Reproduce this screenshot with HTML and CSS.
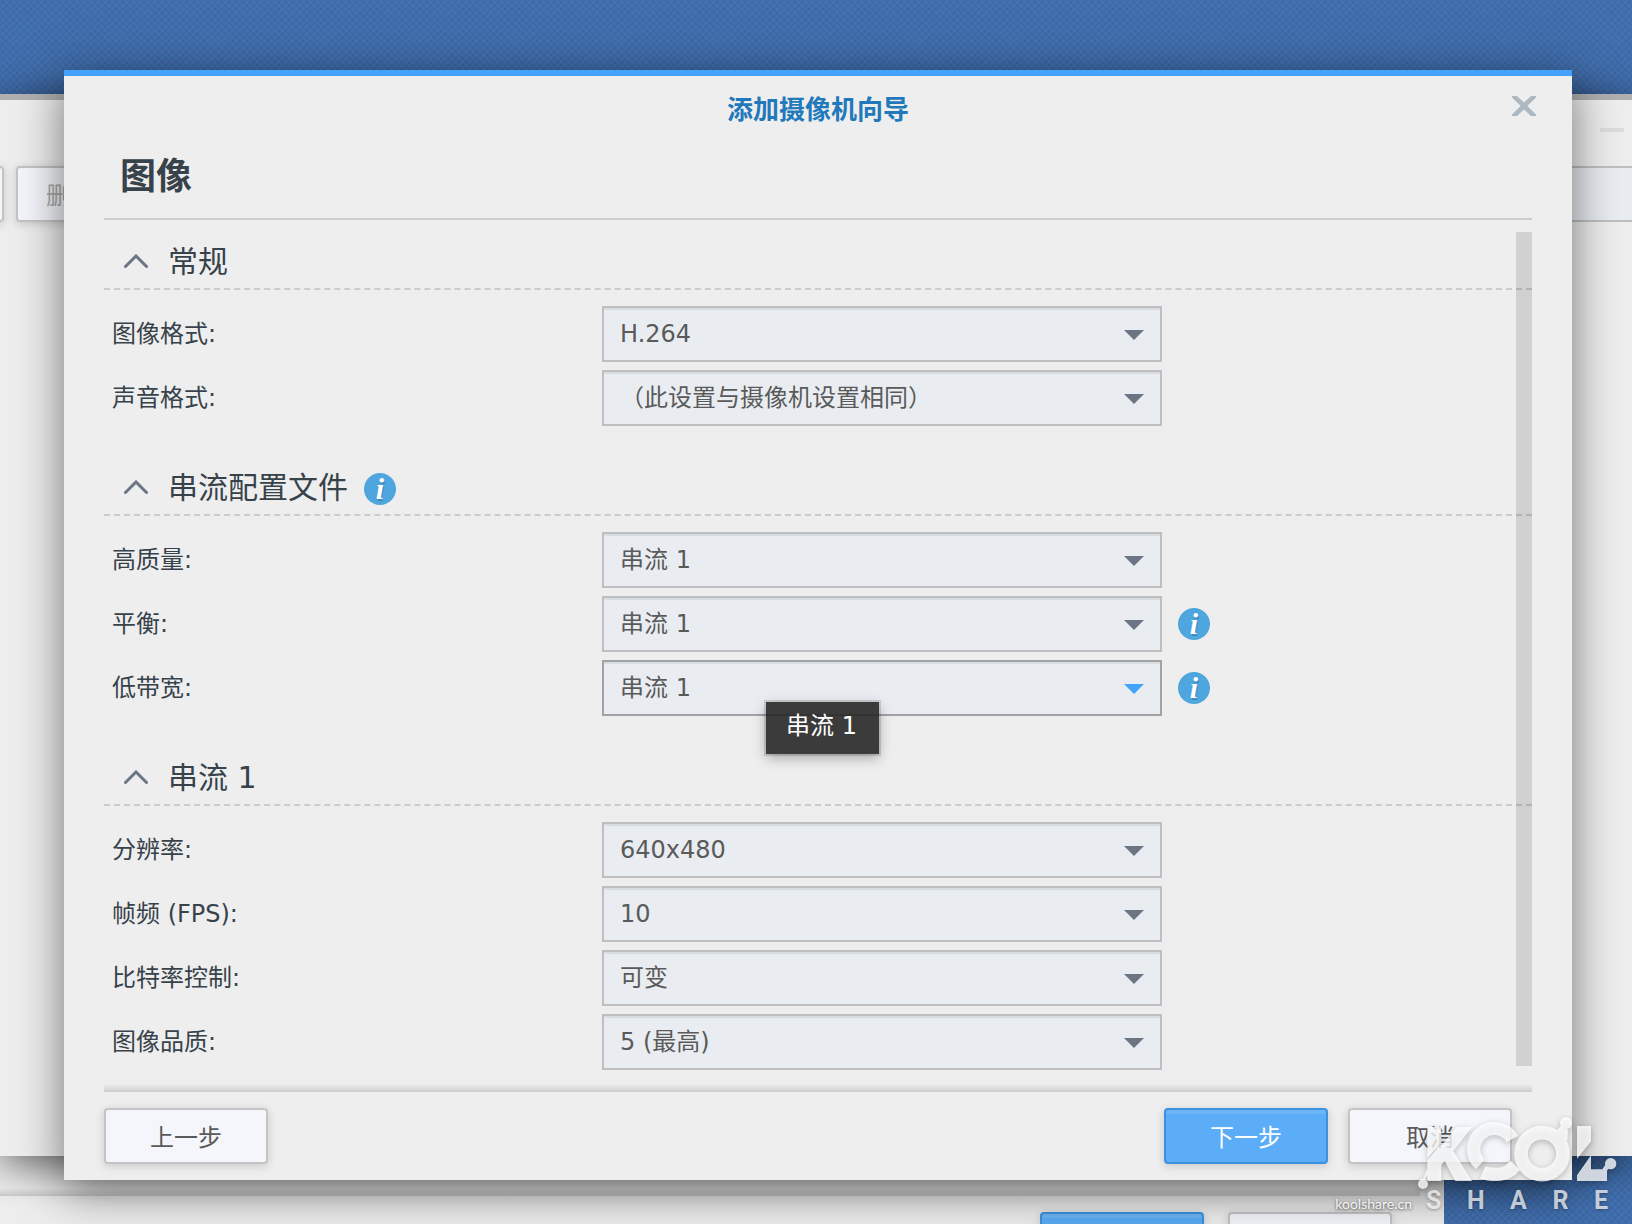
FILE: index.html
```html
<!DOCTYPE html>
<html lang="zh-CN">
<head>
<meta charset="utf-8">
<title>添加摄像机向导</title>
<link rel="stylesheet" href="styles.css">
</head>
<body>
<div class="desktop">
  <div class="lower-window">
    <div class="lower-footer">
      <button class="btn btn-primary" type="button" aria-label="下一步"></button>
      <button class="btn" type="button" aria-label="取消"></button>
    </div>
  </div>

  <div class="app-window">
    <div class="app-titlebar"><span class="minimize"></span></div>
    <div class="app-toolbar">
      <button class="btn btn-cut" type="button" aria-label="编辑"></button>
      <button class="btn btn-delete" type="button" disabled>删除</button>
      <input class="search" type="text" aria-label="搜索">
    </div>
  </div>

  <main class="dialog" role="dialog" aria-labelledby="dialog-title">
    <header class="dialog-header">
      <h1 class="dialog-title" id="dialog-title">添加摄像机向导</h1>
      <button class="close" type="button" aria-label="关闭">
        <svg width="24" height="20" viewBox="0 0 24 20"><path d="M0 0h5l7 6.500L19 0h5v1.500L15.300 10 24 18.500V20h-5l-7-6.500L5 20H0v-1.500L8.700 10 0 1.500z" fill="#adb9c2"/></svg>
      </button>
    </header>
    <h2 class="step-title">图像</h2>

    <form class="panel">
      <section>
        <h3 class="section-title"><svg class="chevron" viewBox="0 0 24 14"><path d="M1.500 12.500 12 2l10.500 10.500"/></svg>常规</h3>
        <div class="row"><label for="video">图像格式:</label><span class="select"><select id="video"><option>H.264</option></select></span></div>
        <div class="row"><label for="audio">声音格式:</label><span class="select"><select id="audio"><option>（此设置与摄像机设置相同）</option></select></span></div>
      </section>
      <section>
        <h3 class="section-title"><svg class="chevron" viewBox="0 0 24 14"><path d="M1.500 12.500 12 2l10.500 10.500"/></svg>串流配置文件<span class="info">i</span></h3>
        <div class="row"><label for="high">高质量:</label><span class="select"><select id="high"><option>串流 1</option></select></span></div>
        <div class="row"><label for="balanced">平衡:</label><span class="select"><select id="balanced"><option>串流 1</option></select></span><span class="info">i</span></div>
        <div class="row"><label for="low">低带宽:</label><span class="select select-hover"><select id="low"><option>串流 1</option></select><span class="tooltip" role="tooltip">串流 1</span></span><span class="info">i</span></div>
      </section>
      <section>
        <h3 class="section-title"><svg class="chevron" viewBox="0 0 24 14"><path d="M1.500 12.500 12 2l10.500 10.500"/></svg>串流 1</h3>
        <div class="row"><label for="resolution">分辨率:</label><span class="select"><select id="resolution"><option>640x480</option></select></span></div>
        <div class="row"><label for="fps">帧频 (FPS):</label><span class="select"><select id="fps"><option>10</option></select></span></div>
        <div class="row"><label for="bitrate">比特率控制:</label><span class="select"><select id="bitrate"><option>可变</option></select></span></div>
        <div class="row"><label for="quality">图像品质:</label><span class="select"><select id="quality"><option>5 (最高)</option></select></span></div>
      </section>
      <span class="scrollbar"></span>
    </form>

    <footer class="dialog-footer">
      <button class="btn btn-back" type="button">上一步</button>
      <button class="btn btn-primary" type="button">下一步</button>
      <button class="btn" type="button">取消</button>
    </footer>
  </main>

  <div class="watermark">
    <span class="watermark-site">koolshare.cn</span>
    <div class="watermark-brand">
      <svg class="watermark-logo" viewBox="0 0 660 240" role="img" aria-label="KOOL">
        <g fill="#fff" opacity=".78">
          <path d="M46 45h42v56l46-56h46l-56 72 56 90h-50l-32-60-10 12v48H46v-20l-13 25-4-2 17-38v-26l42-52-42 44z"/>
          <circle cx="33" cy="216" r="15"/>
          <path d="M301 81A62 62 0 1 0 205 157" fill="none" stroke="#fff" stroke-width="40"/>
          <path d="M212 181q14 6 42 6c28 0 42-12 56-27" fill="none" stroke="#fff" stroke-width="40"/>
          <circle cx="390" cy="125" r="63" fill="none" stroke="#fff" stroke-width="41"/>
          <path d="m428 62 22-24 18 16-2 34z"/>
          <circle cx="462" cy="33" r="18"/>
          <path d="M495 42h42v46l-42 52zM495 190l42-60v42h34l16-24 8 14-10 14v31h-90z"/>
          <circle cx="596" cy="155" r="17"/>
        </g>
      </svg>
      <div class="watermark-word"><span>S</span><span>H</span><span>A</span><span>R</span><span>E</span></div>
    </div>
  </div>
</div>
</body>
</html>
```
FILE: styles.css
```css
* { box-sizing: border-box; }
body { margin: 0; }
body, button, input, select {
  font-family: "DejaVu Sans", "Noto Sans CJK SC", sans-serif;
  font-size: 24px;
}
h1, h2, h3 { margin: 0; }

.desktop {
  position: relative;
  min-height: 100vh;
  padding: 70px 60px 44px 64px;
  overflow: hidden;
  background-color: #4472b0;
  background-image:
    repeating-linear-gradient(45deg, rgba(20, 50, 110, .08) 0 2px, transparent 2px 5px),
    repeating-linear-gradient(-45deg, rgba(20, 50, 110, .08) 0 2px, transparent 2px 5px);
}

/* windows stacked on the desktop */
.lower-window {
  position: absolute;
  inset: 900px 188px 0 0;
  display: flex;
  flex-direction: column;
  justify-content: flex-end;
  background: #eee;
}
.lower-footer {
  display: flex;
  justify-content: flex-end;
  gap: 24px;
  height: 36px;
  padding: 24px 52px 0 0;
  position: relative;
}
.lower-footer::before {
  content: "";
  position: absolute;
  inset: 0 24px auto 0;
  height: 8px;
  background: linear-gradient(transparent, #ccc);
}
.app-window {
  position: absolute;
  inset: 94px 0 68px 0;
  background: #eee;
  border-top: 6px solid #b0b0b0;
  box-shadow: 0 8px 40px rgba(0, 0, 0, .6);
}
.app-titlebar {
  display: flex;
  justify-content: flex-end;
  height: 66px;
  padding: 28px 8px 0;
}
.minimize { width: 24px; height: 4px; background: #ddd; }
.app-toolbar { display: flex; gap: 12px; }
.btn-cut { margin-left: -160px; }
.search {
  flex: 1;
  height: 56px;
  margin-right: -10px;
  border: 2px solid #c0c0c0;
  background: #e9edf2;
}

.btn {
  width: 164px;
  height: 56px;
  flex: none;
  padding: 0 0 2px;
  border: 2px solid #c4c4c4;
  border-radius: 4px;
  background: #f4f6fb;
  color: #5a5a5a;
  box-shadow: 0 2px 10px rgba(0, 0, 0, .16);
}
.btn-primary {
  border-color: #3c92e0;
  background: linear-gradient(#6cb5f6 4px, #5aadf6 4px);
  color: #fff;
}
.btn-delete { padding-left: 28px; text-align: left; color: #aaa; }

/* wizard dialog */
.dialog {
  position: relative;
  padding: 0 40px 16px;
  border-top: 6px solid #43a2fa;
  background: #eee;
  box-shadow: 0 10px 44px rgba(0, 0, 0, .52);
}
.dialog-header { position: relative; padding-top: 16px; text-align: center; }
.dialog-title { font-size: 26px; line-height: 36px; color: #2179bc; }
.close {
  position: absolute;
  top: 20px;
  right: -4px;
  padding: 0;
  border: 0;
  background: none;
  line-height: 0;
}
.step-title {
  height: 92px;
  padding: 20px 16px 0;
  border-bottom: 2px solid #ccc;
  font-size: 36px;
  line-height: 58px;
  color: #37424b;
}
.panel { position: relative; padding: 10px 0 14px; }
.panel section + section { margin-top: 30px; }
.section-title {
  display: flex;
  align-items: center;
  height: 60px;
  padding: 0 20px;
  margin-bottom: 16px;
  border-bottom: 2px dashed #ccc;
  font-size: 30px;
  font-weight: 400;
  color: #37424b;
}
.chevron {
  width: 24px;
  height: 14px;
  margin: 4px 20px 0 0;
  fill: none;
  stroke: #6b7583;
  stroke-width: 3;
  stroke-linecap: round;
}
.section-title .info { margin: 8px 0 0 16px; }
.row { display: flex; align-items: center; padding-left: 8px; color: #37424b; }
.row + .row { margin-top: 8px; }
.row label { width: 490px; padding-bottom: 6px; }
.select { position: relative; width: 560px; height: 56px; }
.select select {
  appearance: none;
  width: 100%;
  height: 100%;
  padding: 0 48px 0 16px;
  border: 2px solid #bfbfbf;
  border-radius: 0;
  background: #e9edf2;
  box-shadow: inset 0 2px #d8dde3;
  color: #5a5a5a;
}
.select::after {
  content: "";
  position: absolute;
  top: 24px;
  right: 18px;
  width: 20px;
  height: 10px;
  background: #6b7583;
  clip-path: polygon(0 0, 100% 0, 50% 100%);
  pointer-events: none;
}
.select-hover select { border-color: #a2a2a4; }
.select-hover::after { background: #43a2fa; }
.tooltip {
  position: absolute;
  top: 42px;
  left: 164px;
  z-index: 1;
  height: 52px;
  padding: 0 22px 0 20px;
  background: rgba(34, 34, 34, .88);
  box-shadow: 0 0 0 2px rgba(0, 0, 0, .12), 0 4px 12px rgba(0, 0, 0, .3);
  line-height: 48px;
  color: #fff;
}
.info {
  width: 32px;
  height: 32px;
  border-radius: 50%;
  background: #4fa6de;
  font: italic bold 30px/32px "Liberation Serif", serif;
  text-align: center;
  color: #fff;
  text-shadow: 1px 2px #3c8cc0;
}
.row .info { margin-left: 16px; }
.scrollbar {
  position: absolute;
  top: 12px;
  right: 0;
  bottom: 18px;
  width: 16px;
  background: rgba(0, 0, 0, .12);
}
.dialog-footer {
  position: relative;
  display: flex;
  gap: 20px;
  padding: 24px 20px 0 0;
}
.dialog-footer::before {
  content: "";
  position: absolute;
  inset: 0 0 auto;
  height: 8px;
  background: linear-gradient(transparent, #ccc);
}
.btn-back { margin-right: auto; }

/* site mark over the corner */
.watermark {
  position: absolute;
  right: 0;
  bottom: 10px;
  display: flex;
  align-items: flex-end;
  pointer-events: none;
}
.watermark-site {
  font: 14px/20px Lato, sans-serif;
  color: rgba(255, 255, 255, .9);
  text-shadow: 0 1px 3px rgba(0, 0, 0, .7);
}
.watermark-brand { width: 220px; }
.watermark-logo { display: block; width: 100%; margin-bottom: -4px; filter: drop-shadow(0 2px 3px rgba(0, 0, 0, .3)); }
.watermark-word {
  display: flex;
  justify-content: space-between;
  padding: 0 24px 0 14px;
  font: bold 25px/26px Roboto, sans-serif;
  color: rgba(255, 255, 255, .72);
  text-shadow: 0 1px 3px rgba(0, 0, 0, .3);
}
```
